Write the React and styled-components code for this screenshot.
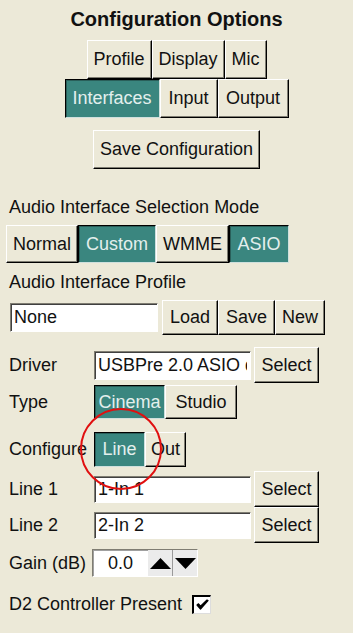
import React, { useState } from 'react';
import styled, { createGlobalStyle, css } from 'styled-components';

const GlobalStyle = createGlobalStyle`
  body {
    margin: 0;
    background: #ece9d8;
  }
`;

const TEAL = '#3a867f';

const Page = styled.div`
  width: 353px;
  height: 633px;
  background: #ece9d8;
  font-family: "Liberation Sans", Arial, sans-serif;
  font-size: 18px;
  color: #111;
  overflow: hidden;
`;

const Title = styled.h1`
  margin: 0;
  padding-top: 8px;
  font-size: 20px;
  line-height: 22px;
  font-weight: 700;
  text-align: center;
`;

const Row = styled.div`
  display: flex;
  align-items: center;
  justify-content: ${({ $center }) => ($center ? 'center' : 'flex-start')};
  height: ${({ $h }) => $h}px;
  margin-top: ${({ $mt }) => $mt || 0}px;
  padding-left: ${({ $pl }) => $pl || 0}px;
`;

const Group = styled.div`
  position: relative;
  display: flex;
  height: 100%;
  margin-left: ${({ $ml }) => $ml || 0}px;
`;

const Btn = styled.button`
  box-sizing: border-box;
  width: ${({ $w }) => $w}px;
  height: 100%;
  margin-left: ${({ $ml }) => $ml || 0}px;
  padding: 0;
  font-family: inherit;
  font-size: 18px;
  color: #111;
  background: #ece9d8;
  border: 1px solid;
  border-color: #fff #000 #000 #fff;
  box-shadow: inset -1px -1px #7f7d72;
  white-space: nowrap;
  cursor: pointer;
  ${({ $on }) =>
    $on &&
    css`
      background: ${TEAL};
      color: #e3efed;
      border-color: #000 #cfe0dd #cfe0dd #000;
      box-shadow: inset 1px 1px #2a5f5a;
    `}
`;

const SectionLabel = styled.div`
  margin-top: ${({ $mt }) => $mt}px;
  padding-left: 9px;
  line-height: 20px;
  height: 20px;
`;

const FieldLabel = styled.div`
  width: ${({ $w }) => ($w ? `${$w}px` : 'auto')};
  padding-left: 9px;
  flex-shrink: 0;
`;

const TextBox = styled.input`
  box-sizing: border-box;
  width: ${({ $w }) => $w}px;
  height: ${({ $h }) => $h}px;
  margin: 0;
  padding: 0 3px;
  font-family: inherit;
  font-size: 18px;
  color: #111;
  background: #fff;
  border: 1px solid;
  border-color: #7f7d72 #fff #fff #7f7d72;
  box-shadow: inset 1px 1px #404040;
  outline: none;
`;

const Spinner = styled.div`
  box-sizing: border-box;
  display: flex;
  width: 106px;
  height: 28px;
  border: 1px solid;
  border-color: #7f7d72 #fff #fff #7f7d72;
  box-shadow: inset 1px 1px #a0a0a0;
  background: #fff;
`;

const SpinValue = styled.div`
  width: 55px;
  padding-left: 15px;
  box-sizing: border-box;
  line-height: 26px;
`;

const SpinBtn = styled.button`
  box-sizing: border-box;
  width: ${({ $w }) => $w}px;
  height: 100%;
  padding: 0;
  border: none;
  border-left: ${({ $sep }) => ($sep ? '1px solid #9a9a9a' : 'none')};
  background: #ebebeb;
  display: flex;
  align-items: center;
  justify-content: center;
  cursor: pointer;
`;

const Check = styled.div`
  box-sizing: border-box;
  width: 19px;
  height: 19px;
  margin-left: 10px;
  background: #fff;
  border-top: 2px solid #000;
  border-left: 2px solid #000;
  border-right: 1px solid #ddd;
  border-bottom: 1px solid #ddd;
  display: flex;
  align-items: center;
  justify-content: center;
`;

const Highlight = styled.div`
  position: absolute;
  left: -14px;
  top: -24px;
  width: 82px;
  height: 82px;
  border: 2px solid #e01010;
  border-radius: 50%;
  box-sizing: border-box;
  pointer-events: none;
`;

const Arrow = ({ up }) => (
  <svg width="21" height="12" viewBox="0 0 21 12">
    <polygon points={up ? '0,12 10.5,1 21,12' : '0,1 21,1 10.5,12'} fill="#000" />
  </svg>
);

const CheckMark = () => (
  <svg width="13" height="11" viewBox="0 0 13 11">
    <path d="M1 6 L4.5 10 L12 1.5 L11 1 L4.5 7.2 L2.5 4.8 Z" fill="#000" stroke="#000" strokeWidth="1.2" strokeLinejoin="round" />
  </svg>
);

export default function App() {
  const [tab, setTab] = useState('Interfaces');
  const [mode, setMode] = useState('Custom');
  const [type, setType] = useState('Cinema');
  const [conf, setConf] = useState('Line');

  return (
    <Page>
      <GlobalStyle />
      <Title>Configuration Options</Title>

      <Row $center $h={39} $mt={10}>
        <Group>
          {[['Profile', 65], ['Display', 73], ['Mic', 42]].map(([t, w]) => (
            <Btn key={t} $w={w} $on={tab === t} onClick={() => setTab(t)}>{t}</Btn>
          ))}
        </Group>
      </Row>
      <Row $center $h={39}>
        <Group>
          {[['Interfaces', 95], ['Input', 58], ['Output', 71]].map(([t, w]) => (
            <Btn key={t} $w={w} $on={tab === t} onClick={() => setTab(t)}>{t}</Btn>
          ))}
        </Group>
      </Row>

      <Row $center $h={39} $mt={12}>
        <Btn $w={167}>Save Configuration</Btn>
      </Row>

      <SectionLabel $mt={28}>Audio Interface Selection Mode</SectionLabel>
      <Row $h={38} $mt={8}>
        <Group $ml={6}>
          {[['Normal', 72], ['Custom', 78], ['WMME', 73], ['ASIO', 60]].map(([t, w]) => (
            <Btn
              key={t}
              $w={w}
              $on={t === 'ASIO' || mode === t}
              onClick={() => t !== 'ASIO' && setMode(t)}
            >
              {t}
            </Btn>
          ))}
        </Group>
      </Row>

      <SectionLabel $mt={9}>Audio Interface Profile</SectionLabel>
      <Row $h={35} $mt={8} $pl={10}>
        <TextBox $w={148} $h={29} defaultValue="None" />
        <Group $ml={4}>
          <Btn $w={56}>Load</Btn>
          <Btn $w={57}>Save</Btn>
          <Btn $w={50}>New</Btn>
        </Group>
      </Row>

      <Row $h={36} $mt={12}>
        <FieldLabel $w={85}>Driver</FieldLabel>
        <TextBox $w={157} $h={29} defaultValue="USBPre 2.0 ASIO driver" />
        <Btn $w={65} $ml={3}>Select</Btn>
      </Row>

      <Row $h={34} $mt={2}>
        <FieldLabel $w={85}>Type</FieldLabel>
        <Group>
          {[['Cinema', 71], ['Studio', 72]].map(([t, w]) => (
            <Btn key={t} $w={w} $on={type === t} onClick={() => setType(t)}>{t}</Btn>
          ))}
        </Group>
      </Row>

      <Row $h={35} $mt={13}>
        <FieldLabel $w={85}>Configure</FieldLabel>
        <Group>
          {[['Line', 51], ['Out', 41]].map(([t, w]) => (
            <Btn key={t} $w={w} $on={conf === t} onClick={() => setConf(t)}>{t}</Btn>
          ))}
          <Highlight />
        </Group>
      </Row>

      <Row $h={36} $mt={4}>
        <FieldLabel $w={85}>Line 1</FieldLabel>
        <TextBox $w={157} $h={27} defaultValue="1-In 1" />
        <Btn $w={65} $ml={3}>Select</Btn>
      </Row>
      <Row $h={36}>
        <FieldLabel $w={85}>Line 2</FieldLabel>
        <TextBox $w={157} $h={27} defaultValue="2-In 2" />
        <Btn $w={65} $ml={3}>Select</Btn>
      </Row>

      <Row $h={28} $mt={6}>
        <FieldLabel $w={83}>Gain (dB)</FieldLabel>
        <Spinner>
          <SpinValue>0.0</SpinValue>
          <SpinBtn $w={24}><Arrow up /></SpinBtn>
          <SpinBtn $w={25} $sep><Arrow /></SpinBtn>
        </Spinner>
      </Row>

      <Row $h={24} $mt={15}>
        <FieldLabel>D2 Controller Present</FieldLabel>
        <Check><CheckMark /></Check>
      </Row>
    </Page>
  );
}
